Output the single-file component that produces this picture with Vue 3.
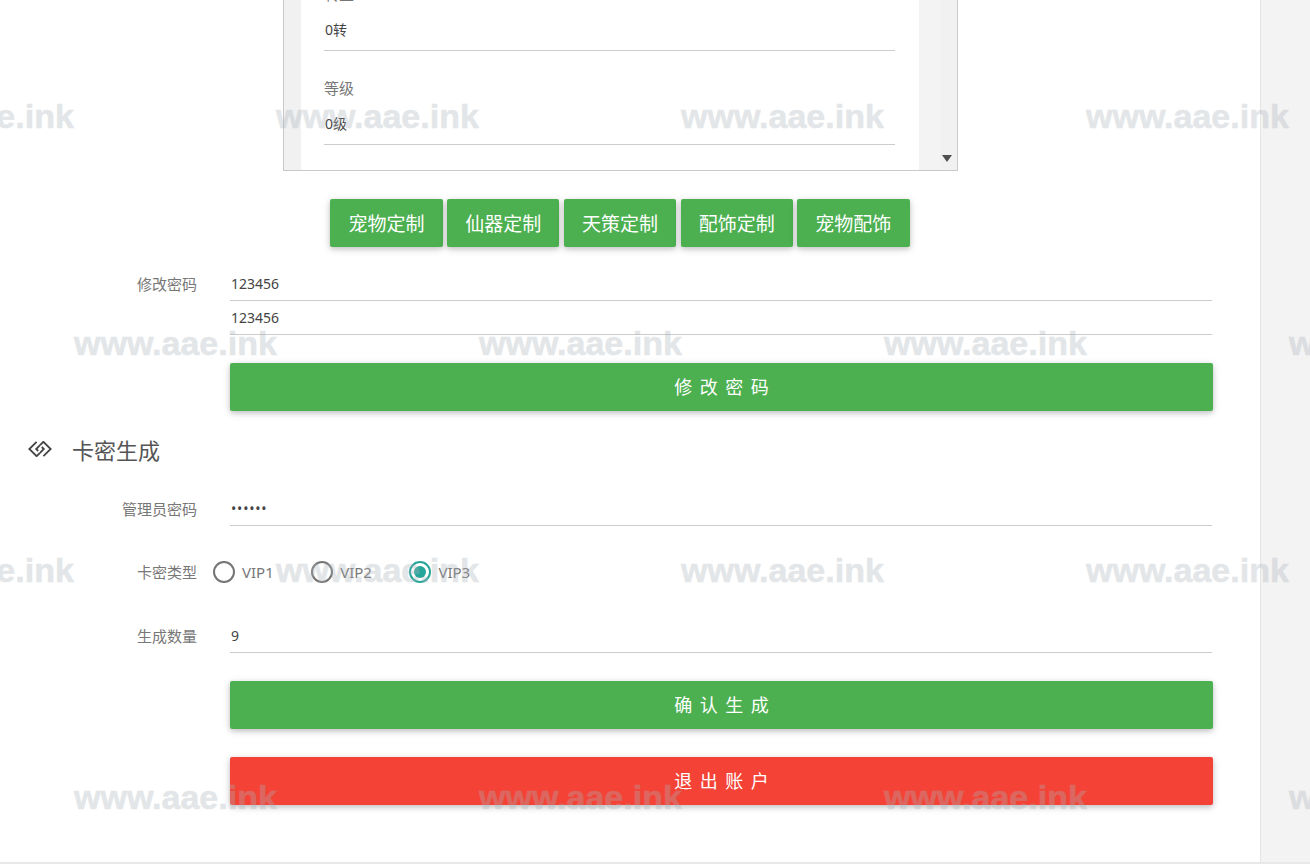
<script setup>
const rows = [
  { top: 96, left: -129 },
  { top: 323, left: 74 },
  { top: 550, left: -129 },
  { top: 777, left: 74 }
]
const repeats = [0, 1, 2, 3, 4]
const tabs = ['宠物定制', '仙器定制', '天策定制', '配饰定制', '宠物配饰']
const vips = [
  { name: 'VIP1', on: false },
  { name: 'VIP2', on: false },
  { name: 'VIP3', on: true }
]
</script>

<template>
  <div class="page">
    <main class="main">
      <div class="frame-wrap">
        <div class="frame">
          <div class="gutter"></div>
          <div class="sheet">
            <div class="field">
              <div class="field-label">转生</div>
              <div class="field-value">0转</div>
            </div>
            <div class="field">
              <div class="field-label">等级</div>
              <div class="field-value">0级</div>
            </div>
          </div>
          <div class="side-gap"></div>
          <div class="scrollbar"><span class="arrow"></span></div>
        </div>
      </div>

      <div class="tabs">
        <button v-for="t in tabs" :key="t" class="tab">{{ t }}</button>
      </div>

      <div class="form first">
        <div class="row pw">
          <label class="label">修改密码</label>
          <div class="input">123456</div>
        </div>
        <div class="row pw">
          <span class="label"></span>
          <div class="input">123456</div>
        </div>
        <div class="row action a1">
          <span class="label"></span>
          <button class="wide green">修改密码</button>
        </div>
      </div>

      <h2 class="heading">
        <svg class="heading-icon" viewBox="0 0 24 16" width="24" height="16" fill="none" stroke="#444" stroke-width="1.8">
          <path d="M8.6.8 1.3 8l7.3 7.2 3.4-3.4" />
          <path d="M15.4 15.2 22.7 8 15.4.8 12 4.2" />
          <path d="M12 4.2 8.2 8l2 2M12 11.8 15.8 8l-2-2" />
        </svg>
        <span>卡密生成</span>
      </h2>

      <div class="form">
        <div class="row admin">
          <label class="label">管理员密码</label>
          <div class="input dots">••••••</div>
        </div>
        <div class="row radios">
          <label class="label">卡密类型</label>
          <div class="radio-group">
            <div v-for="v in vips" :key="v.name" class="radio" :class="{ on: v.on }">
              <span class="ring"></span>
              <span class="radio-name">{{ v.name }}</span>
            </div>
          </div>
        </div>
        <div class="row count">
          <label class="label">生成数量</label>
          <div class="input">9</div>
        </div>
        <div class="row action a2">
          <span class="label"></span>
          <button class="wide green">确认生成</button>
        </div>
        <div class="row action a3">
          <span class="label"></span>
          <button class="wide red">退出账户</button>
        </div>
      </div>
    </main>
    <aside class="aside"></aside>

    <div class="marks">
      <div v-for="r in rows" :key="r.top" class="mark-row" :style="{ top: r.top + 'px', left: r.left + 'px' }">
        <span v-for="i in repeats" :key="i" class="mark">www.aae.ink</span>
      </div>
    </div>
  </div>
</template>

<style>
html, body { margin: 0; padding: 0; background: #fff; }
</style>

<style scoped>
.page {
  position: relative;
  width: 1310px;
  height: 864px;
  overflow: hidden;
  display: flex;
  background: #fff;
  font-family: "Noto Sans", "Noto Sans CJK SC", sans-serif;
  color: #555;
  font-size: 14px;
}
.page::after {
  content: "";
  position: absolute;
  left: 0;
  right: 0;
  bottom: 0;
  height: 2px;
  background: #e8e8e8;
}
.main {
  width: 1260px;
  flex: none;
  box-sizing: border-box;
}
.aside {
  flex: 1;
  background: #f3f3f3;
  border-left: 1px solid #e4e4e4;
}
.frame-wrap { padding-left: 283px; }
.frame {
  width: 675px;
  height: 171px;
  box-sizing: border-box;
  border: 1px solid #c9c9c9;
  border-top: 0;
  display: flex;
  overflow: hidden;
}
.gutter { width: 17px; background: #f1f1f1; flex: none; }
.sheet {
  width: 618px;
  flex: none;
  box-sizing: border-box;
  padding: 0 24px 25px 23px;
  background: #fff;
  display: flex;
  flex-direction: column;
  justify-content: flex-end;
}
.side-gap { width: 22px; flex: none; background: #f3f3f3; }
.scrollbar { width: 17px; flex: none; background: #f1f1f1; position: relative; }
.arrow {
  position: absolute;
  left: 1px;
  bottom: 8px;
  width: 0;
  height: 0;
  border-left: 5px solid transparent;
  border-right: 5px solid transparent;
  border-top: 7px solid #505050;
}
.field + .field { margin-top: 25px; }
.field-label { height: 24px; line-height: 24px; color: #777; font-size: 15px; }
.field-value {
  height: 45px;
  line-height: 28px;
  padding: 10px 0 0 1px;
  box-sizing: border-box;
  border-bottom: 1px solid #ccc;
  color: #444;
  font-size: 14px;
}
.tabs {
  display: flex;
  justify-content: center;
  gap: 4.4px;
  width: 1240px;
  margin-top: 28px;
}
.tab {
  width: 112.3px;
  height: 48px;
  padding: 0;
  border: 0;
  border-radius: 2px;
  background: #4caf50;
  color: #fff;
  font: inherit;
  font-size: 19px;
  box-shadow: 0 2px 5px rgba(0, 0, 0, .16), 0 2px 10px rgba(0, 0, 0, .12);
}
.form { display: flex; flex-direction: column; }
.first { margin-top: 20px; }
.row { display: flex; align-items: center; }
.label {
  width: 197px;
  flex: none;
  margin-top: -2px;
  text-align: right;
  color: #777;
  font-size: 15px;
}
.input {
  width: 982px;
  margin-left: 33px;
  padding-left: 1px;
  box-sizing: border-box;
  height: 34px;
  line-height: 34px;
  border-bottom: 1px solid #ccc;
  color: #444;
  font-size: 14px;
}
.action .wide { margin-left: 33px; }
.wide {
  width: 983px;
  height: 48px;
  padding: 0 0 2px 7.5px;
  border: 0;
  border-radius: 2px;
  color: #fff;
  font: inherit;
  font-size: 18px;
  letter-spacing: 7.5px;
  box-shadow: 0 2px 5px rgba(0, 0, 0, .16), 0 2px 10px rgba(0, 0, 0, .12);
}
.green { background: #4caf50; }
.red { background: #f44336; }
.a1 { margin-top: 28px; }
.heading {
  margin: 21px 0 0 28px;
  height: 34px;
  display: flex;
  align-items: center;
  gap: 20px;
  font-weight: 400;
  font-size: 22px;
  color: #555;
}
.heading-icon { flex: none; }
.admin { margin-top: 26px; }
.dots { letter-spacing: .8px; }
.radios { margin-top: 29px; height: 34px; }
.radio-group { display: flex; margin-left: 16px; }
.radio { width: 98.2px; display: flex; align-items: center; gap: 7px; flex: none; }
.ring {
  width: 22px;
  height: 22px;
  box-sizing: border-box;
  border: 2px solid #757575;
  border-radius: 50%;
  position: relative;
  flex: none;
}
.radio.on .ring { border-color: #26a69a; }
.radio.on .ring::after {
  content: "";
  position: absolute;
  inset: 3px;
  border-radius: 50%;
  background: #26a69a;
}
.radio-name { color: #777; font-size: 15px; }
.count { margin-top: 30px; }
.a2 { margin-top: 28px; }
.a3 { margin-top: 28px; }
.marks {
  position: absolute;
  inset: 0;
  pointer-events: none;
  overflow: hidden;
}
.mark-row {
  position: absolute;
  display: flex;
  width: 2100px;
}
.mark {
  width: 405px;
  flex: none;
  font-family: "Liberation Sans", sans-serif;
  font-weight: 700;
  font-size: 34px;
  line-height: 40px;
  color: rgb(170, 178, 185);
  -webkit-text-stroke: .6px rgb(170, 178, 185);
  opacity: .32;
}
</style>
